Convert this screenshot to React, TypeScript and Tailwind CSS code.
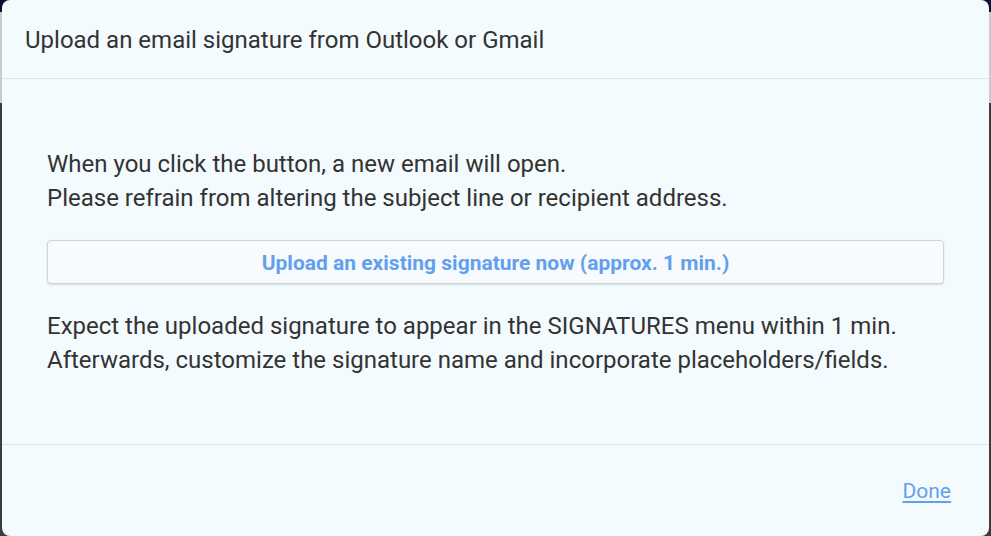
import React from 'react';

const App: React.FC = () => {
  const handleUpload = () => {
    console.log('Open upload email');
  };

  return (
    <div className="w-[991px] h-[536px] overflow-hidden bg-[linear-gradient(to_bottom,#0d1030_0px,#0d1030_12px,#c9cbcd_12px,#c9cbcd_103px,#3c3c3c_103px,#3c3c3c_100%)] px-[2px] font-['Roboto','Liberation_Sans',sans-serif]">
      <div className="h-[536px] flex flex-col rounded-[8px] bg-[#f4fbfe] text-[#333333]">
        <div className="h-[79px] flex items-center px-[23px] pt-[2px] border-b border-[#dde3e8]">
          <h2 className="text-[24px] leading-none">Upload an email signature from Outlook or Gmail</h2>
        </div>

        <div className="flex-1 px-[45px] pt-[68px] border-b border-[#dde3e8]">
          <p className="text-[24px] leading-[34px]">
            When you click the button, a new email will open.
            <br />
            Please refrain from altering the subject line or recipient address.
          </p>
          <button
            onClick={handleUpload}
            className="mt-[25px] w-full h-[44px] pt-[4px] rounded-[4px] border border-[#cfd3d6] bg-[#f7fbfd] shadow-[0_1px_2px_rgba(0,0,0,0.12)] text-[21px] font-bold text-[#62a0ee]"
          >
            Upload an existing signature now (approx. 1 min.)
          </button>
          <p className="mt-[25px] text-[24px] leading-[34px]">
            Expect the uploaded signature to appear in the SIGNATURES menu within 1 min.
            <br />
            Afterwards, customize the signature name and incorporate placeholders/fields.
          </p>
        </div>

        <div className="h-[91px] flex items-center justify-end px-[38px] pt-[2px]">
          <a href="#" className="text-[21px] text-[#62a0ee] underline underline-offset-[3px]">
            Done
          </a>
        </div>
      </div>
    </div>
  );
};

export default App;
